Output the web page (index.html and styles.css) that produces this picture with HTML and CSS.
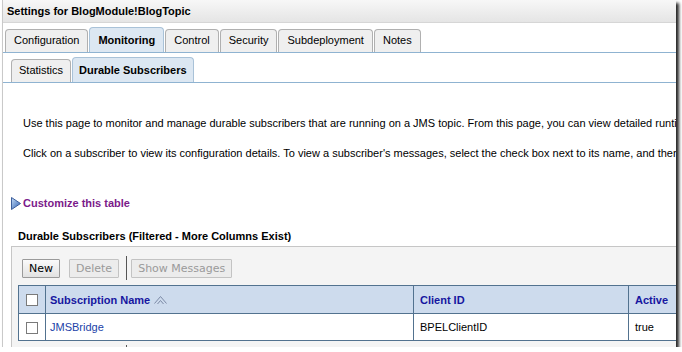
FILE: index.html
```html
<!DOCTYPE html>
<html lang="en">
<head>
  <meta charset="UTF-8">
  <title>Settings for BlogModule!BlogTopic</title>
  <link rel="stylesheet" href="styles.css">
</head>
<body>
  <div class="window">
    <!-- 標題列 -->
    <div class="titlebar">Settings for BlogModule!BlogTopic</div>

    <!-- 主頁籤 -->
    <div class="tabs">
      <div class="tab">Configuration</div>
      <div class="tab selected">Monitoring</div>
      <div class="tab">Control</div>
      <div class="tab">Security</div>
      <div class="tab">Subdeployment</div>
      <div class="tab">Notes</div>
    </div>

    <!-- 子頁籤 -->
    <div class="tabs subtabs">
      <div class="tab">Statistics</div>
      <div class="tab selected">Durable Subscribers</div>
    </div>

    <div class="content">
      <p class="intro">Use this page to monitor and manage durable subscribers that are running on a JMS topic. From this page, you can view detailed runtime statistics for each subscriber.</p>
      <p class="intro second">Click on a subscriber to view its configuration details. To view a subscriber's messages, select the check box next to its name, and then click Show Messages.</p>

      <div class="customize">
        <svg class="arrow" width="10" height="13" viewBox="0 0 10 13">
          <defs>
            <linearGradient id="tri" x1="0" y1="0" x2="1" y2="1">
              <stop offset="0" stop-color="#c4dcf6"/>
              <stop offset="1" stop-color="#2a5cb0"/>
            </linearGradient>
          </defs>
          <polygon points="0.5,0.5 9.5,6.5 0.5,12.5" fill="url(#tri)" stroke="#3d5f9c" stroke-width="1"/>
        </svg>
        <span>Customize this table</span>
      </div>

      <div class="table-title">Durable Subscribers (Filtered - More Columns Exist)</div>

      <div class="table-box">
        <div class="toolbar">
          <button class="btn">New</button>
          <button class="btn" disabled>Delete</button>
          <span class="sep"></span>
          <button class="btn" disabled>Show Messages</button>
        </div>

        <table class="grid">
          <tr class="head">
            <th class="chk"><span class="box"></span></th>
            <th class="c-name">Subscription Name
              <svg class="sort" width="13" height="10" viewBox="0 0 13 10">
                <polyline points="0.5,8.5 6.5,1.5 12.5,8.5" fill="none" stroke="#7c8aa6" stroke-width="1"/>
                <polyline points="3.5,9 6.5,5.5 9.5,9" fill="none" stroke="#7c8aa6" stroke-width="1"/>
              </svg>
            </th>
            <th class="c-client">Client ID</th>
            <th class="c-active">Active</th>
          </tr>
          <tr>
            <td class="chk"><span class="box"></span></td>
            <td class="c-name"><a href="#">JMSBridge</a></td>
            <td class="c-client">BPELClientID</td>
            <td class="c-active">true</td>
          </tr>
        </table>

        <div class="toolbar bottom">
          <span class="sep"></span>
        </div>
      </div>
    </div>
  </div>
</body>
</html>
```

FILE: styles.css
```css
* {
  box-sizing: border-box;
}
body {
  margin: 0;
  background: #fff;
  font-family: "Liberation Sans", Arial, sans-serif;
  font-size: 11px;
  color: #000;
}
.window {
  width: 674px;
  height: 347px;
  margin-left: 2px;
  border-left: 1px solid #c9c9c9;
  background: #fff;
  overflow: hidden;
  box-shadow: 3px 3px 3px rgba(0,0,0,0.85);
}
.titlebar {
  height: 23px;
  line-height: 22px;
  padding-left: 4px;
  font-weight: bold;
  background: linear-gradient(#f7f7f7, #e5e5e5);
  border-bottom: 1px solid #d6d6d6;
  white-space: nowrap;
}
/* 頁籤 */
.tabs {
  display: flex;
  align-items: flex-end;
  gap: 1px;
  height: 30px;
  padding-left: 2px;
  border-bottom: 1px solid #8fb3d1;
}
.tab {
  height: 23px;
  line-height: 21px;
  padding: 0 8px;
  border: 1px solid #b0b0b0;
  border-bottom: none;
  border-radius: 4px 4px 0 0;
  background: #efefef;
  white-space: nowrap;
}
.tab.selected {
  height: 25px;
  line-height: 24px;
  padding: 0 8px;
  font-weight: bold;
  background: #dce7f2;
  border-color: #a9c2d8;
}
.subtabs {
  margin-left: -1px;
  padding-left: 8px;
  border-left: 1px solid #8fb3d1;
}
.subtabs .tab {
  padding: 0 7px;
}
.subtabs .tab.selected {
  padding: 0 6px;
}
.content {
  padding-top: 33px;
}
.intro {
  margin: 0 0 16px 20px;
  line-height: 14px;
  white-space: nowrap;
}
.intro.second {
  margin-bottom: 36px;
}
.customize {
  display: flex;
  align-items: center;
  gap: 2px;
  margin-left: 8px;
  height: 14px;
  font-weight: bold;
  color: #7b1a8a;
}
.customize .arrow {
  display: block;
}
.table-title {
  margin: 19px 0 3px 15px;
  line-height: 14px;
  font-weight: bold;
}
.table-box {
  margin-left: 8px;
  border-top: 1px solid #c6c6c6;
  border-left: 1px solid #c6c6c6;
  background: #f4f4f4;
  height: 200px;
}
.toolbar {
  display: flex;
  align-items: center;
  height: 33px;
  padding: 9px 0 0 10px;
}
.toolbar.bottom {
  height: 30px;
  padding: 4px 0 0 116px;
  align-items: flex-start;
}
.btn {
  height: 19px;
  padding: 0 6px;
  margin-right: 9px;
  font-family: "DejaVu Sans", sans-serif;
  font-size: 11px;
  font-weight: normal;
  color: #000;
  background: linear-gradient(#fafafa, #e2e2e2);
  border: 1px solid #9a9a9a;
  border-radius: 1px;
}
.btn:disabled {
  color: #9a9a9a;
  background: #ececec;
  border-color: #c3c3c3;
}
.sep {
  width: 1px;
  height: 24px;
  margin: 0 4px 0 -2px;
  background: #555;
}
/* 資料表 */
.grid {
  margin: 5px 0 0 6px;
  border-collapse: collapse;
  table-layout: fixed;
  width: 732px;
}
.grid th,
.grid td {
  border: 1px solid #52728f;
  padding: 0 6px;
  text-align: left;
  white-space: nowrap;
}
.grid tr.head {
  height: 28px;
  background: #cddbed;
}
.grid tr {
  height: 27px;
  background: #fff;
}
.grid th {
  font-weight: bold;
  color: #1616a0;
}
.grid .chk {
  width: 27px;
  padding: 0;
  text-align: center;
}
.grid .c-name {
  width: 368px;
  padding-left: 4px;
}
.grid .c-client {
  width: 215px;
}
.grid .c-active {
  width: 122px;
}
.box {
  display: inline-block;
  width: 12px;
  height: 12px;
  vertical-align: middle;
  border: 1px solid #7a7a7a;
  background: #fff;
}
.sort {
  vertical-align: -1px;
  margin-left: 1px;
}
.grid a {
  color: #2142a8;
  text-decoration: none;
}
```
